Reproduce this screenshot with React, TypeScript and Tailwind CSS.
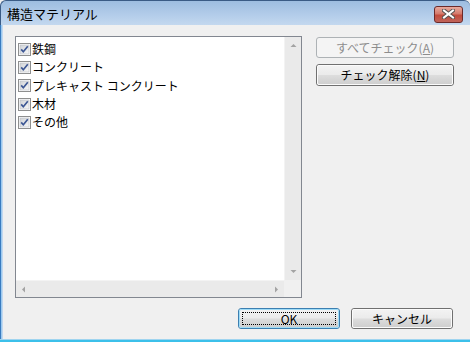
import React from 'react';

const FONT = { fontFamily: '"Noto Sans CJK JP", "Noto Sans", sans-serif' };

const items = ['鉄鋼', 'コンクリート', 'プレキャスト コンクリート', '木材', 'その他'];

function CheckBox() {
  return (
    <svg width="13" height="13" viewBox="0 0 13 13" className="shrink-0">
      <defs>
        <linearGradient id="cbg" x1="0" y1="0" x2="1" y2="1">
          <stop offset="0" stopColor="#cfd2d6" />
          <stop offset="1" stopColor="#f8f8f8" />
        </linearGradient>
      </defs>
      <rect x="0.5" y="0.5" width="12" height="12" fill="#fff" stroke="#8e8f8f" />
      <rect x="2" y="2" width="9" height="9" fill="url(#cbg)" stroke="#b8bcc2" strokeWidth="0.6" />
      <path d="M3.2 6.4 L5.3 8.8 L9.8 3.2" fill="none" stroke="#3d5794" strokeWidth="1.7" />
    </svg>
  );
}

function Arrow({ dir }: { dir: 'up' | 'down' | 'left' | 'right' }) {
  const d = {
    up: 'M0.5 4 L3.5 1 L6.5 4 Z',
    down: 'M0.5 1 L3.5 4 L6.5 1 Z',
    left: 'M4 0.5 L1 3.5 L4 6.5 Z',
    right: 'M1 0.5 L4 3.5 L1 6.5 Z',
  }[dir];
  const vertical = dir === 'up' || dir === 'down';
  return (
    <svg width={vertical ? 7 : 5} height={vertical ? 5 : 7} viewBox={vertical ? '0 0 7 5' : '0 0 5 7'}>
      <path d={d} fill="#a3a3a3" />
    </svg>
  );
}

function Button({ label, disabled, focused, className }: { label: React.ReactNode; disabled?: boolean; focused?: boolean; className: string }) {
  if (disabled) {
    return (
      <div className={`${className} flex items-center justify-center rounded-[3px] border border-[#adb2b5] bg-[#f4f4f4] text-[12px] text-[#8d8d8d]`}>
        {label}
      </div>
    );
  }
  return (
    <div
      className={`${className} relative flex items-center justify-center rounded-[3px] border text-[12px] text-black ${
        focused ? 'border-[#3c7fb1]' : 'border-[#707070]'
      }`}
    >
      <div
        className={`absolute inset-0 rounded-[2px] border ${focused ? 'border-[#9fdcf7]' : 'border-[#fbfbfb]'} bg-[linear-gradient(to_bottom,#f2f2f2_0%,#ebebeb_48%,#dddddd_52%,#cfcfcf_100%)]`}
      />
      {focused && <div className="absolute inset-[3px] border border-dotted border-black" />}
      <span className="relative">{label}</span>
    </div>
  );
}

export default function App() {
  return (
    <div className="w-[470px] h-[342px] flex flex-col overflow-hidden bg-[#f0f0f0]" style={FONT}>
      {/* Title bar */}
      <div className="h-[25px] flex items-center rounded-t-[6px] border-t border-l border-[#3a5b85] bg-[linear-gradient(to_bottom,#9dbde0,#b4cdea_60%,#c3d8ef)]">
        <span className="ml-[6px] text-[13px] text-black leading-none">構造マテリアル</span>
        <div className="ml-auto mr-[7px] mt-[2px] w-[29px] h-[17px] rounded-[3px] border border-[#6b2a2a] flex items-center justify-center bg-[linear-gradient(to_bottom,#e8aa9e_0%,#d47a6c_45%,#c24b3c_55%,#c0645a_100%)]">
          <svg width="13" height="10" viewBox="0 0 13 10">
            <path d="M2 1.5 L11 8.5 M11 1.5 L2 8.5" stroke="#55504f" strokeWidth="4" strokeLinecap="square" />
            <path d="M2 1.5 L11 8.5 M11 1.5 L2 8.5" stroke="#ffffff" strokeWidth="2" strokeLinecap="square" />
          </svg>
        </div>
      </div>

      <div className="flex-1 flex">
        {/* Left frame */}
        <div className="w-[3px] flex">
          <div className="w-[1px] bg-[#3a7cc0]" />
          <div className="w-[1px] bg-[#9ccaf0]" />
          <div className="w-[1px] bg-[#c3d8ef]" />
        </div>

        {/* Client area */}
        <div className="flex-1 pl-[12px] pt-[11px] pr-[16px]">
          <div className="flex">
            {/* List box */}
            <div className="w-[287px] h-[262px] border border-[#828790] bg-white flex flex-col">
              <div className="flex-1 flex">
                <div className="flex-1 pt-[3px] pl-[2px]">
                  {items.map((it) => (
                    <div key={it} className="h-[18.3px] flex items-center gap-[1px]">
                      <CheckBox />
                      <span className="text-[12px] text-black leading-none whitespace-nowrap">{it}</span>
                    </div>
                  ))}
                </div>
                <div className="w-[17px] flex flex-col bg-[#eaeaea] border-l border-[#f3f3f3]">
                  <div className="h-[17px] flex items-center justify-center">
                    <Arrow dir="up" />
                  </div>
                  <div className="flex-1" />
                  <div className="h-[17px] flex items-center justify-center">
                    <Arrow dir="down" />
                  </div>
                </div>
              </div>
              <div className="h-[17px] flex">
                <div className="flex-1 flex items-center justify-between px-[5px] bg-[#eaeaea] border-t border-[#f3f3f3]">
                  <Arrow dir="left" />
                  <Arrow dir="right" />
                </div>
                <div className="w-[17px] bg-[#f0f0f0]" />
              </div>
            </div>

            {/* Right buttons */}
            <div className="ml-[14px] mt-[1px] w-[138px] flex flex-col gap-[6px]">
              <Button className="h-[21px]" disabled label={<>すべてチェック(<u>A</u>)</>} />
              <Button className="h-[22px]" label={<>チェック解除(<u>N</u>)</>} />
            </div>
          </div>

          <div className="mt-[10px] flex justify-end gap-[11px] pr-[1px]">
            <Button className="w-[102px] h-[21px]" focused label="OK" />
            <Button className="w-[102px] h-[21px]" label="キャンセル" />
          </div>
        </div>
      </div>

      {/* Bottom frame */}
      <div className="h-[3px] flex flex-col">
        <div className="h-[1px] bg-[#9fd4ef]" />
        <div className="h-[2px] bg-[#3cc0ea]" />
      </div>
    </div>
  );
}
